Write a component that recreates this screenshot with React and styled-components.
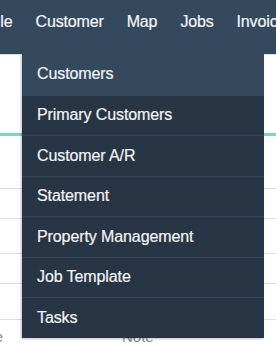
import React from 'react';
import styled, { createGlobalStyle } from 'styled-components';

const GlobalStyle = createGlobalStyle`
    html, body {
        margin: 0;
        padding: 0;
        background: #ffffff;
        overflow: hidden;
    }
    body {
        font-family: "Liberation Sans", Arial, sans-serif;
    }
`;

const navItems = ['Schedule', 'Customer', 'Map', 'Jobs', 'Invoices', 'Reports'];

const menuOptions = [
    { id: 'customers', label: 'Customers' },
    { id: 'primary', label: 'Primary Customers' },
    { id: 'ar', label: 'Customer A/R' },
    { id: 'statement', label: 'Statement' },
    { id: 'property', label: 'Property Management' },
    { id: 'template', label: 'Job Template' },
    { id: 'tasks', label: 'Tasks' },
];

const Page = styled.div`
    position: relative;
    width: 276px;
    height: 344px;
    overflow: hidden;
`;

const NavBar = styled.nav`
    height: 54px;
    background-color: #34495e;
    overflow: hidden;
`;

// the bar is scrolled sideways, so "Schedule" sits partly off screen
const NavList = styled.ul`
    display: flex;
    gap: 23px;
    margin: 0 0 0 -53px;
    padding: 0;
    list-style: none;
    white-space: nowrap;
`;

const NavItem = styled.li`
    line-height: 44px;
    font-size: 16px;
    letter-spacing: -0.15px;
    color: #f4f6f8;
    -webkit-text-stroke: 0.2px #f4f6f8;
`;

const Content = styled.div`
    border-top: 1px solid #dcdcdc;
    display: flex;
    flex-direction: column;
`;

const TealBar = styled.div`
    margin-top: 78px;
    height: 3px;
    background-color: #7fd3c3;
`;

const Row = styled.div`
    height: ${p => p.$h}px;
    border-bottom: 1px solid #dedede;
    box-sizing: border-box;
`;

const HeaderRow = styled.div`
    display: flex;
    margin-left: -37px;
    padding-top: 8px;
    font-size: 15px;
    color: #8a8a8a;
`;

const HeaderCell = styled.span`
    width: ${p => p.$w}px;
    flex: none;
`;

const DropdownMenu = styled.ul`
    position: absolute;
    top: 54px;
    left: 22px;
    width: 242px;
    margin: 0;
    padding: 0;
    list-style: none;
    background-color: #283545;
    box-shadow: -1px 1px 2px rgba(0, 0, 0, 0.25);
`;

const DropdownMenuItem = styled.li`
    box-sizing: border-box;
    height: 40.5px;
    padding: 0 15px;
    display: flex;
    align-items: center;
    font-size: 16px;
    letter-spacing: -0.1px;
    color: #f2f4f6;
    -webkit-text-stroke: 0.2px #f2f4f6;
    background-color: ${p => (p.$active ? '#34495e' : 'transparent')};
    border-top: ${p => (p.$first ? 'none' : '1px solid #36485b')};
    cursor: pointer;
`;

function App() {
    return (
        <Page>
            <GlobalStyle />
            <NavBar>
                <NavList>
                    {navItems.map(item => (
                        <NavItem key={item}>{item}</NavItem>
                    ))}
                </NavList>
            </NavBar>
            <Content>
                <TealBar />
                <Row $h={53} />
                <Row $h={30} />
                <Row $h={35} />
                <Row $h={30} />
                <Row $h={36} />
                <HeaderRow>
                    <HeaderCell $w={159}>Name</HeaderCell>
                    <HeaderCell $w={60}>Note</HeaderCell>
                </HeaderRow>
            </Content>
            <DropdownMenu>
                {menuOptions.map(({ id, label }, index) => (
                    <DropdownMenuItem key={id} $active={index === 0} $first={index === 0}>
                        {label}
                    </DropdownMenuItem>
                ))}
            </DropdownMenu>
        </Page>
    );
}

export default App;
